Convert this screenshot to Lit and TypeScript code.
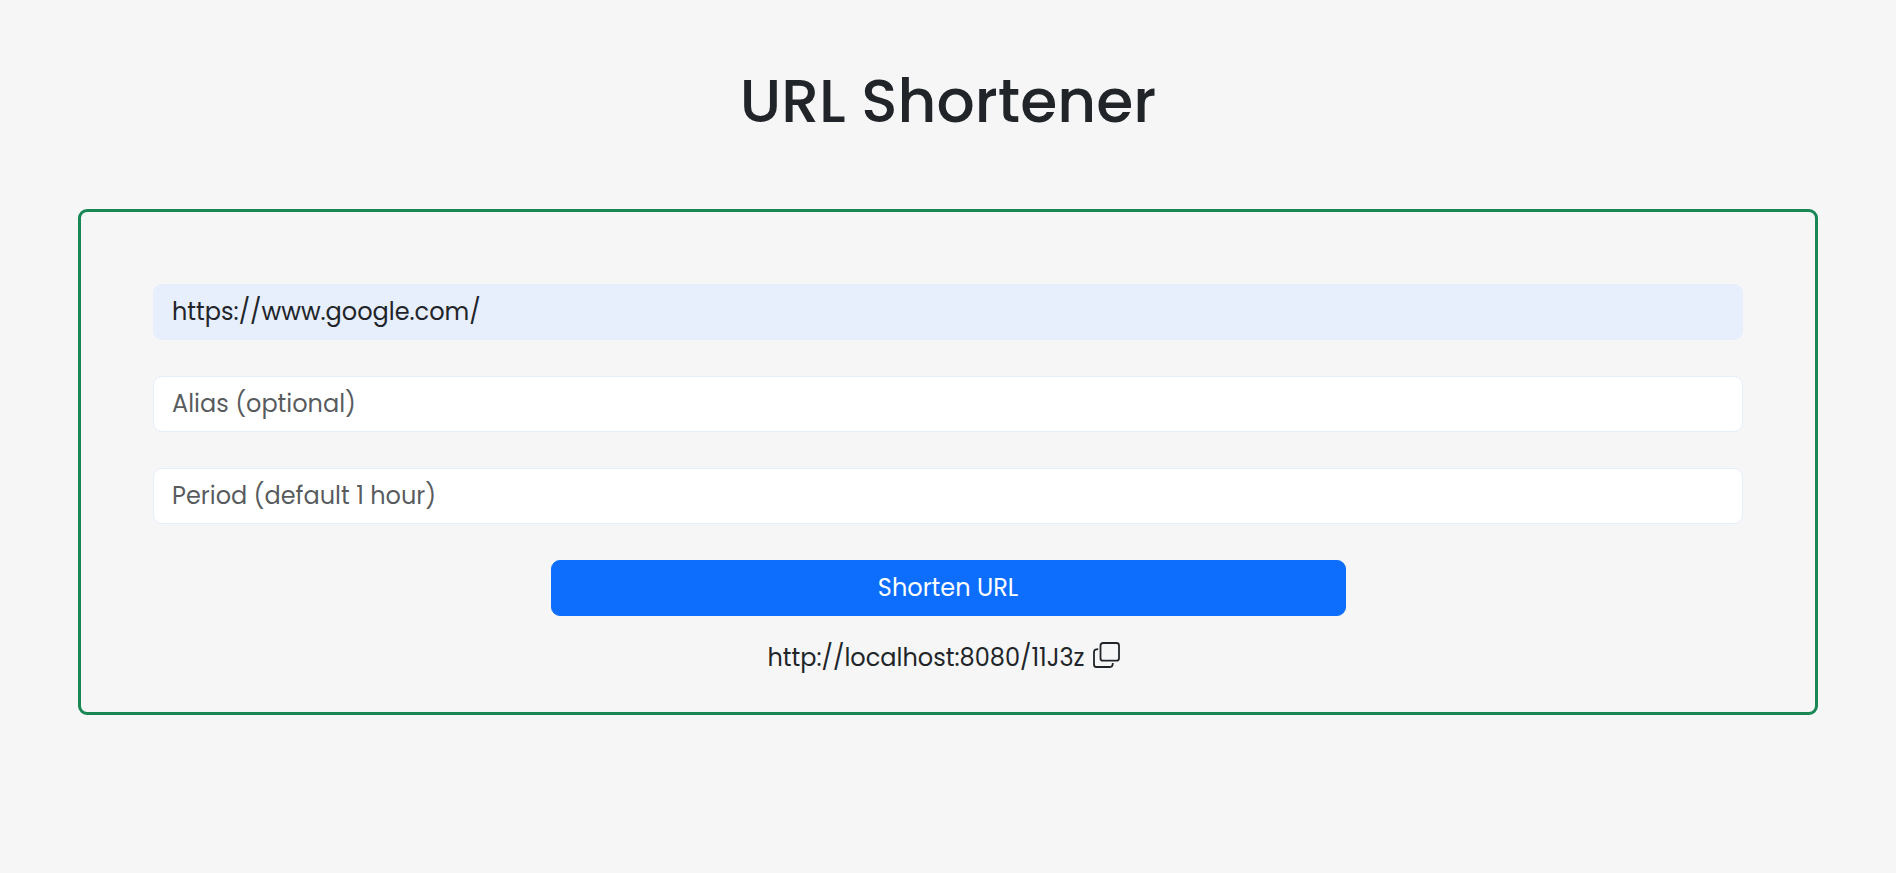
import { LitElement, html, css } from "lit";
import { customElement, property } from "lit/decorators.js";

@customElement("copy-icon")
export class CopyIcon extends LitElement {
  static styles = css`
    :host {
      display: block;
      width: 27px;
      height: 26px;
    }
    svg {
      display: block;
      fill: none;
      stroke: #212529;
      stroke-width: 1.8;
      stroke-linecap: butt;
    }
  `;

  render() {
    return html`<svg width="27" height="26" viewBox="0 0 27 26" aria-hidden="true">
      <rect x="7.5" y="1" width="18.5" height="17.7" rx="2.5" />
      <path d="M5.2 7.1Q1 7.1 1 10V22.4Q1 25 3.6 25H17Q19.8 25 19.8 21" />
    </svg>`;
  }
}

@customElement("app-root")
export class AppRoot extends LitElement {
  @property() url = "https://www.google.com/";
  @property() shortUrl = "http://localhost:8080/11J3z";

  static styles = css`
    :host {
      display: block;
      box-sizing: border-box;
      min-height: 873px;
      padding: 65px 78px 0;
      background: #f6f6f6;
      color: #212529;
      font: 400 24px/36px Poppins, Inter, sans-serif;
    }
    .title {
      margin: 0 0 72px;
      font-size: 60px;
      font-weight: 500;
      line-height: 72px;
      text-align: center;
    }
    .card {
      display: flex;
      flex-direction: column;
      gap: 36px;
      padding: 72px 72px 36px;
      border: 3px solid #198754;
      border-radius: 9px;
    }
    .field {
      box-sizing: border-box;
      width: 100%;
      height: 56px;
      margin: 0;
      padding: 8px 18px 10px;
      border: 1px solid #e6eefc;
      border-radius: 9px;
      background: #fff;
      color: #212529;
      font: inherit;
      outline: none;
    }
    .field.filled {
      background: #e7eefc;
    }
    .field::placeholder {
      color: rgba(33, 37, 41, 0.75);
      opacity: 1;
    }
    .actions {
      display: flex;
      flex-direction: column;
      align-items: center;
      gap: 24px;
    }
    .submit {
      width: 50%;
      height: 56px;
      padding: 9px 18px;
      border: 1px solid #0d6efd;
      border-radius: 9px;
      background: #0d6efd;
      color: #fff;
      font: inherit;
    }
    .result {
      display: flex;
      gap: 8.5px;
      padding-right: 8.5px;
    }
    .copy {
      padding-top: 2px;
    }
  `;

  render() {
    return html`
      <h1 class="title">URL Shortener</h1>
      <main class="card">
        <input class="field filled" .value=${this.url} />
        <input class="field" placeholder="Alias (optional)" />
        <input class="field" placeholder="Period (default 1 hour)" />
        <div class="actions">
          <button class="submit">Shorten URL</button>
          <div class="result">
            <span>${this.shortUrl}</span>
            <copy-icon class="copy"></copy-icon>
          </div>
        </div>
      </main>
    `;
  }
}
